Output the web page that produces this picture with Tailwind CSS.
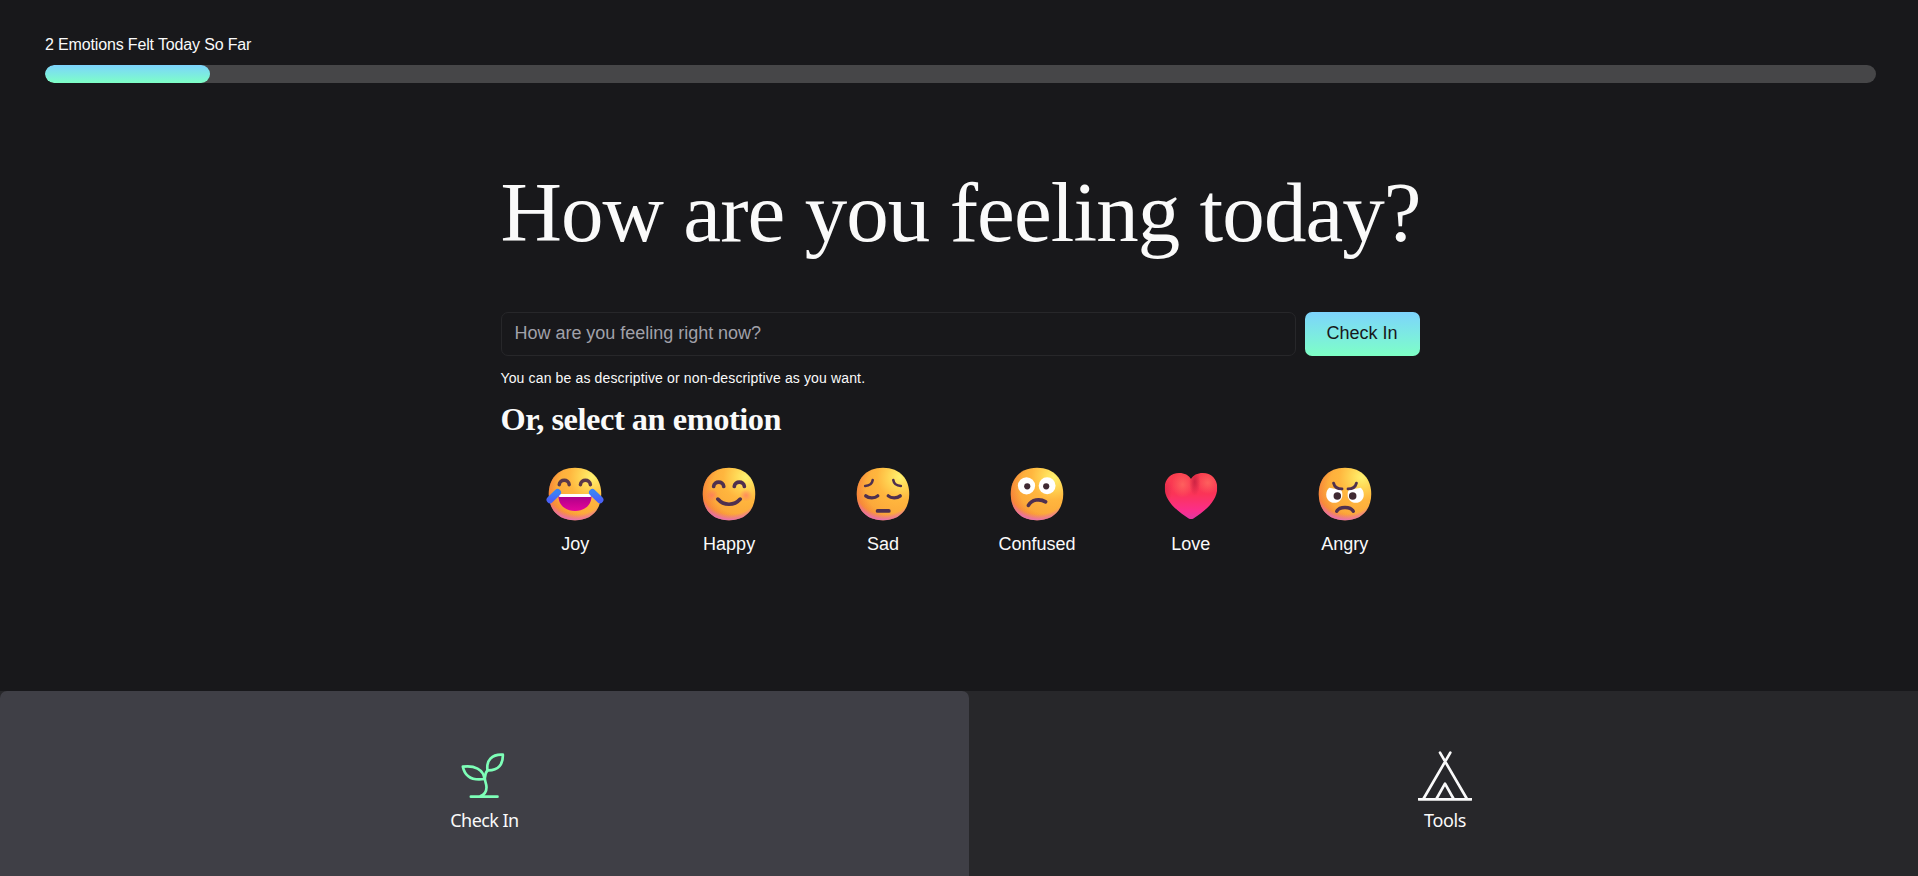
<!DOCTYPE html>
<html lang="en">
<head>
<meta charset="utf-8">
<title>Check In</title>
<script src="https://cdn.jsdelivr.net/npm/@tailwindcss/browser@4"></script>
</head>
<body class="bg-[#18181b] overflow-hidden">
<svg width="0" height="0" class="absolute">
  <defs>
    <radialGradient id="base" gradientUnits="userSpaceOnUse" cx="25" cy="7" r="27"><stop offset="0" stop-color="#FFF270"/><stop offset=".2" stop-color="#FFD856"/><stop offset=".45" stop-color="#FFB63E"/><stop offset="1" stop-color="#F9A038"/></radialGradient>
    <radialGradient id="edge" gradientUnits="userSpaceOnUse" cx="17" cy="10" r="20.5"><stop offset=".82" stop-color="#E86BD0" stop-opacity="0"/><stop offset="1" stop-color="#E06BD0" stop-opacity=".9"/></radialGradient>
    <radialGradient id="warm" gradientUnits="userSpaceOnUse" cx="20" cy="13" r="22"><stop offset=".6" stop-color="#F6643C" stop-opacity="0"/><stop offset="1" stop-color="#F0603C" stop-opacity=".8"/></radialGradient>
    <radialGradient id="cheek"><stop offset="0" stop-color="#FF6A6A" stop-opacity=".6"/><stop offset="1" stop-color="#FF6A6A" stop-opacity="0"/></radialGradient>
    <linearGradient id="mouth" x1="0" y1="0" x2="0" y2="1"><stop offset="0" stop-color="#A0028F"/><stop offset=".5" stop-color="#C5028F"/><stop offset="1" stop-color="#E3069C"/></linearGradient>
    <linearGradient id="tear" x1="0" y1="0" x2="0" y2="1"><stop offset="0" stop-color="#3B82F5"/><stop offset="1" stop-color="#4A62F8"/></linearGradient>
    <linearGradient id="heart" x1="0" y1="0" x2="0" y2="1"><stop offset="0" stop-color="#F8424A"/><stop offset=".5" stop-color="#FB3457"/><stop offset=".78" stop-color="#FB2E8C"/><stop offset="1" stop-color="#D33DB0"/></linearGradient>
    <radialGradient id="heartLight"><stop offset="0" stop-color="#FF6A60" stop-opacity=".8"/><stop offset="1" stop-color="#FF6A60" stop-opacity="0"/></radialGradient>
    <radialGradient id="heartDark"><stop offset="0" stop-color="#C31F40" stop-opacity=".8"/><stop offset="1" stop-color="#C31F40" stop-opacity="0"/></radialGradient>
    <clipPath id="heartClip"><path d="M16 8C17.2 6 19.5 4.8 22.3 4.8C26.7 4.8 30 8 30 12.6C30 19.5 24 24.7 17.3 29C16.5 29.5 15.6 29.5 14.8 29C8 24.7 2 19.5 2 12.6C2 8 5.3 4.8 9.7 4.8C12.5 4.8 14.8 6 16 8Z"/></clipPath>
    <g id="face">
      <path d="M16 30c9.334 0 14-6.268 14-14S25.334 2 16 2 2 8.268 2 16s4.666 14 14 14Z" fill="url(#base)"/>
      <path d="M16 30c9.334 0 14-6.268 14-14S25.334 2 16 2 2 8.268 2 16s4.666 14 14 14Z" fill="url(#warm)"/>
      <path d="M16 30c9.334 0 14-6.268 14-14S25.334 2 16 2 2 8.268 2 16s4.666 14 14 14Z" fill="url(#edge)"/>
    </g>
  </defs>
</svg>
<div class="w-[1921px] h-[876px] flex flex-col text-[#fafafa] font-['Liberation_Sans',sans-serif]">
  <header class="px-[45px] pt-[33px]">
    <p class="text-base leading-6 mb-2 tracking-[-0.15px]">2 Emotions Felt Today So Far</p>
    <div class="h-[18px] rounded-full bg-[#464648] overflow-hidden">
      <div class="h-full rounded-full bg-linear-to-b from-[#7dd3fc] to-[#7effc5]" style="width:9%"></div>
    </div>
  </header>

  <main class="w-[920px] pr-px mx-auto pt-[84px] h-[608px]">
    <h1 class="font-['Liberation_Serif',serif] text-[85px] leading-[90px] tracking-[-0.92px] whitespace-nowrap">How are you feeling today?</h1>
    <form class="mt-[55px] flex gap-[9px]">
      <div class="flex-1 h-11 rounded-[7px] border border-[#27272a] px-[13px] flex items-center text-lg leading-[27px] pb-[2px] text-[#a1a1aa] tracking-[-0.02px]">How are you feeling right now?</div>
      <button type="button" class="w-[115px] h-11 rounded-[7px] pb-[2px] text-lg text-[#18181b] bg-linear-to-b from-[#7dd3fc] to-[#7effc5]">Check In</button>
    </form>
    <p class="mt-3 text-sm leading-5 tracking-[0.14px] whitespace-nowrap">You can be as descriptive or non-descriptive as you want.</p>
    <h2 class="mt-[11px] font-['Liberation_Serif',serif] font-bold text-[32.4px] leading-[41px] tracking-[-0.46px] whitespace-nowrap">Or, select an emotion</h2>
    <div class="mt-6 grid grid-cols-6 gap-[4.5px] text-lg leading-[27px]">
      <div class="flex flex-col items-center gap-[7px]">
        <svg class="size-[60px]" viewBox="0 0 32 32" fill="none"><use href="#face"/>
          <g stroke="#5A3848" stroke-width="1.9" stroke-linecap="round"><path d="M7.6 11C7.9 7.9 12.6 7.9 12.9 11"/><path d="M18.9 11C19.2 7.9 23.9 7.9 24.2 11"/></g>
          <path d="M7.2 16H24.8V17C24.8 22 21 25 16 25S7.2 22 7.2 17Z" fill="url(#mouth)"/>
          <path d="M7.2 16H24.8V16.6C24.8 17.2 24.4 17.6 23.8 17.6H8.2C7.6 17.6 7.2 17.2 7.2 16.6Z" fill="#fff"/>
          <g stroke="url(#tear)" stroke-width="3.7" stroke-linecap="round"><path d="M6.7 15.2L2.7 19.1"/><path d="M25.3 15.2L29.3 19.1"/></g>
        </svg><span>Joy</span></div>
      <div class="flex flex-col items-center gap-[7px]">
        <svg class="size-[60px]" viewBox="0 0 32 32" fill="none"><use href="#face"/>
          <circle cx="6.9" cy="16.7" r="3.4" fill="url(#cheek)"/><circle cx="25.1" cy="16.7" r="3.4" fill="url(#cheek)"/>
          <g stroke="#4F304F" stroke-width="1.95" stroke-linecap="round"><path d="M7.8 12C8.1 8.9 12.9 8.9 13.2 12"/><path d="M18.8 12C19.1 8.9 23.9 8.9 24.2 12"/><path d="M10 18.7C13.2 22.4 18.8 22.4 22 18.7"/></g>
        </svg><span>Happy</span></div>
      <div class="flex flex-col items-center gap-[7px]">
        <svg class="size-[60px]" viewBox="0 0 32 32" fill="none"><use href="#face"/>
          <g stroke="#4F304F" stroke-linecap="round"><g stroke-width="1.4"><path d="M10.5 8.6C10.2 10.5 8.7 11.6 6.5 11.7"/><path d="M21.5 8.6C21.8 10.5 23.3 11.6 25.5 11.7"/></g>
          <g stroke-width="1.8"><path d="M6.8 17C8.4 18.4 11.7 18.4 13.2 17"/><path d="M18.8 17C20.3 18.4 23.6 18.4 25.2 17"/></g><path stroke-width="2" d="M13.1 25H19.1"/></g>
        </svg><span>Sad</span></div>
      <div class="flex flex-col items-center gap-[7px]">
        <svg class="size-[60px]" viewBox="0 0 32 32" fill="none"><use href="#face"/>
          <circle cx="10.4" cy="11.6" r="4.6" fill="#fff"/><circle cx="21.4" cy="11.6" r="4.5" fill="#fff"/>
          <circle cx="10.8" cy="11.9" r="1.65" fill="#402A32"/><circle cx="20.9" cy="11.9" r="1.65" fill="#402A32"/>
          <path d="M11.4 22.1C13.2 19 17.4 18.2 20.6 20.2" stroke="#4F304F" stroke-width="1.95" stroke-linecap="round"/>
        </svg><span>Confused</span></div>
      <div class="flex flex-col items-center gap-[7px]">
        <svg class="size-[60px]" viewBox="0 0 32 32"><g clip-path="url(#heartClip)"><rect width="32" height="32" fill="url(#heart)"/>
          <ellipse cx="11.5" cy="11" rx="6" ry="7" fill="url(#heartLight)"/><ellipse cx="25" cy="10" rx="6" ry="6" fill="url(#heartLight)"/>
          <ellipse cx="18" cy="9.5" rx="3" ry="7.5" fill="url(#heartDark)"/><ellipse cx="2" cy="14" rx="4" ry="8" fill="url(#heartDark)" opacity=".6"/></g>
        </svg><span>Love</span></div>
      <div class="flex flex-col items-center gap-[7px]">
        <svg class="size-[60px]" viewBox="0 0 32 32" fill="none"><use href="#face"/>
          <path d="M7.6 12.7C6.5 13.6 6 15 6 16.4C6 18.8 7.8 20.7 10.3 20.7C12.8 20.7 14.6 18.8 14.6 16.4C14.6 15.4 14.4 14.5 13.9 13.8Z" fill="#fff"/>
          <path d="M24.4 12.7C25.5 13.6 26 15 26 16.4C26 18.8 24.2 20.7 21.7 20.7C19.2 20.7 17.4 18.8 17.4 16.4C17.4 15.4 17.6 14.5 18.1 13.8Z" fill="#fff"/>
          <circle cx="11.9" cy="17" r="2" fill="#402A32"/><circle cx="20.1" cy="17" r="2" fill="#402A32"/>
          <g stroke="#4F304F" stroke-linecap="round"><path stroke-width="1.5" d="M9.9 10.2C10.4 12.2 12 13.3 14.4 13.3M22.1 10.2C21.6 12.2 20 13.3 17.6 13.3"/><path stroke-width="1.8" d="M11.6 25.2C13 22.5 19 22.5 20.4 25.2"/></g>
        </svg><span>Angry</span></div>
    </div>
  </main>

  <nav class="h-[185px] flex bg-[#27272a] text-lg leading-[27px] font-['Noto_Sans',sans-serif]">
    <a class="w-[969px] flex flex-col items-center pt-[58px] gap-1 rounded-t-[7px] bg-[#3f3f46]">
      <svg class="size-[54px]" viewBox="83.5 57 162 162" fill="none" stroke="#7effb8" stroke-width="8" stroke-linecap="round" stroke-linejoin="round">
        <path d="M122 200H202M150 199C164 194 169 184 169 172C169 160 164 156 164 145C164 136 166 128 172 121"/>
        <path d="M98 110C132 105 160 118 163 147C130 152 105 142 98 110Z"/>
        <path d="M218 74C219 102 206 122 172 121C168 92 184 72 218 74Z"/>
      </svg>
      <span class="tracking-[-0.55px]">Check In</span>
    </a>
    <a class="flex-1 flex flex-col items-center pt-[58px] gap-1">
      <svg class="size-[54px]" viewBox="84 57 162 162" fill="none" stroke="#fafafa" stroke-width="8" stroke-linecap="round" stroke-linejoin="round">
        <path d="M150 68L231 207M181 68L100 207M139 207L165 161L191 207M86 208H244"/>
      </svg>
      <span class="tracking-[-0.4px]">Tools</span>
    </a>
  </nav>
</div>
</body>
</html>
